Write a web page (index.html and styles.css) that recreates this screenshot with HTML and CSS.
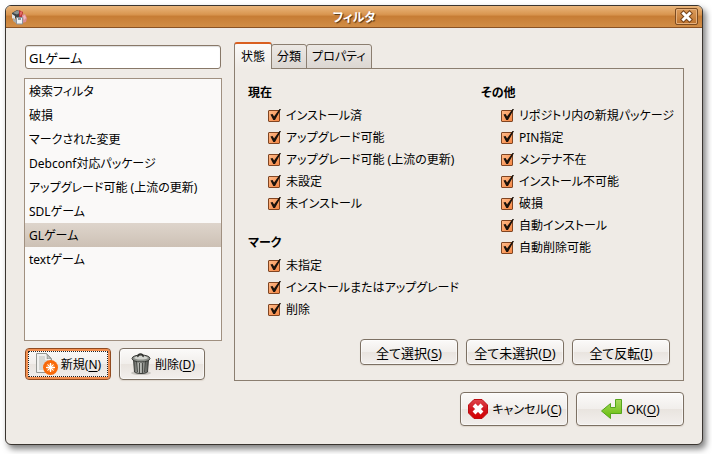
FILE: index.html
```
<!DOCTYPE html>
<html lang="ja">

<head>
  <meta charset="utf-8">
  <title>フィルタ</title>
  <link rel="stylesheet" href="styles.css">
</head>

<body>

  <form class="window">
    <header class="titlebar">
      <svg class="app-icon" width="16" height="16" viewBox="0 0 16 16">
        <path d="M1 4l5-3 5 2-1 5-4 2-5-3z" fill="#3f4446"/>
        <path d="M2 4l4-2.500 4 1.500-4 2.500z" fill="#8b9293"/>
        <path d="M1 5l3 2v5l-3-3z" fill="#e2e4e6"/>
        <path d="M8 1l4 2-1 5-3 1z" fill="#b92f33"/>
        <path d="M9 3l2-1v3l-2 2z" fill="#e06a66"/>
        <path d="M11 6l3-1 2 4-1 4-4 1z" fill="#d98d93"/>
        <path d="M12 7l2-1 1 3-2 2z" fill="#f0b9bd"/>
        <path d="M2 9l4 2v4l-4-3z" fill="#a9aaa9"/>
        <path d="M5.500 8.500h6v6.500h-6z" fill="#f0f3f6" stroke="#8b939b"/>
        <path d="M7 9h3v2H7z" fill="#8796a4"/>
      </svg>
      <h1 class="title">フィルタ</h1>
      <button class="close" type="button" aria-label="閉じる">
        <svg width="13" height="13" viewBox="0 0 13 13">
          <path d="M3.500 3.500l6 6M9.500 3.500l-6 6" stroke="#77451c" stroke-width="5" stroke-linecap="square"/>
          <path d="M3.500 3.500l6 6M9.500 3.500l-6 6" stroke="#fff" stroke-width="3" stroke-linecap="square"/>
        </svg>
      </button>
    </header>

    <main class="content">
      <section class="sidebar">
        <input class="name" type="text" value="GLゲーム" aria-label="フィルタ名">
        <ul class="filters">
          <li>検索フィルタ</li>
          <li>破損</li>
          <li>マークされた変更</li>
          <li>Debconf対応パッケージ</li>
          <li>アップグレード可能 (上流の更新)</li>
          <li>SDLゲーム</li>
          <li class="selected">GLゲーム</li>
          <li>textゲーム</li>
        </ul>
        <div class="sidebar-buttons">
          <button class="button focused" type="button">
            <svg width="24" height="24" viewBox="0 0 24 24">
              <defs>
                <radialGradient id="glow">
                  <stop offset="0" stop-color="#fff"/>
                  <stop offset=".4" stop-color="#ffc08a"/>
                  <stop offset="1" stop-color="#f8690a"/>
                </radialGradient>
              </defs>
              <path d="M1.500 1.500h10l5 5v14h-15z" fill="#f1f1ef" stroke="#969894"/>
              <path d="M11.500 1.500c1 2 1 3 .5 5 2-.5 3.500 0 4.500 1z" fill="#cfd0cd" stroke="#969894"/>
              <path d="M4 5h6M4 7h6M4 9h9M4 11h8M4 13h5M4 15h4M4 17h4" stroke="#bdbfba"/>
              <circle cx="15.500" cy="15.500" r="7.500" fill="#f8690a"/>
              <circle cx="15.500" cy="15.500" r="5" fill="url(#glow)"/>
              <path d="M15.500 11v9M11 15.500h9M12.500 12.500l6 6M18.500 12.500l-6 6" stroke="#fff"/>
            </svg>
            <span>新規(<u>N</u>)</span>
          </button>
          <button class="button" type="button">
            <svg width="24" height="24" viewBox="0 0 24 24">
              <defs>
                <linearGradient id="can">
                  <stop offset="0" stop-color="#555753"/>
                  <stop offset=".4" stop-color="#c5c7c2"/>
                  <stop offset="1" stop-color="#50524e"/>
                </linearGradient>
              </defs>
              <ellipse cx="12" cy="21" rx="10" ry="2" fill="#c7c4bf"/>
              <path d="M4.500 7l1 13c2 2 11 2 13 0l1-13z" fill="url(#can)" stroke="#3b3d3a"/>
              <path d="M7.500 10l1 10M10.500 11v10M13.500 11v10M16.500 10l-1 10" stroke="#4a4c48"/>
              <ellipse cx="12" cy="6.500" rx="9" ry="3.500" fill="#8d908b" stroke="#353733"/>
              <path d="M5 6c2-3 12-3 14 0-3 2-11 2-14 0z" fill="#d3d5d0"/>
              <path d="M9 5c-1-4 6-4 5 0" fill="none" stroke="#30322f" stroke-width="1.500"/>
            </svg>
            <span>削除(<u>D</u>)</span>
          </button>
        </div>
      </section>

      <section class="notebook">
        <div class="tabs" role="tablist">
          <button class="tab active" type="button" role="tab" aria-selected="true">状態</button>
          <button class="tab" type="button" role="tab">分類</button>
          <button class="tab" type="button" role="tab">プロパティ</button>
        </div>
        <div class="panel" role="tabpanel">
          <div class="groups">
            <div class="column">
              <fieldset>
                <legend>現在</legend>
                <label><input type="checkbox" checked>インストール済</label>
                <label><input type="checkbox" checked>アップグレード可能</label>
                <label><input type="checkbox" checked>アップグレード可能 (上流の更新)</label>
                <label><input type="checkbox" checked>未設定</label>
                <label><input type="checkbox" checked>未インストール</label>
              </fieldset>
              <fieldset>
                <legend>マーク</legend>
                <label><input type="checkbox" checked>未指定</label>
                <label><input type="checkbox" checked>インストールまたはアップグレード</label>
                <label><input type="checkbox" checked>削除</label>
              </fieldset>
            </div>
            <div class="column">
              <fieldset>
                <legend>その他</legend>
                <label><input type="checkbox" checked>リポジトリ内の新規パッケージ</label>
                <label><input type="checkbox" checked>PIN指定</label>
                <label><input type="checkbox" checked>メンテナ不在</label>
                <label><input type="checkbox" checked>インストール不可能</label>
                <label><input type="checkbox" checked>破損</label>
                <label><input type="checkbox" checked>自動インストール</label>
                <label><input type="checkbox" checked>自動削除可能</label>
              </fieldset>
            </div>
          </div>
          <div class="select-buttons">
            <button class="button" type="button"><span>全て選択(<u>S</u>)</span></button>
            <button class="button" type="button"><span>全て未選択(<u>D</u>)</span></button>
            <button class="button" type="button"><span>全て反転(<u>I</u>)</span></button>
          </div>
        </div>
      </section>
    </main>

    <footer class="actions">
      <button class="button" type="button">
        <svg width="24" height="24" viewBox="0 0 24 24">
          <defs>
            <linearGradient id="red" x2="0" y2="1">
              <stop offset="0" stop-color="#e0474d"/>
              <stop offset=".5" stop-color="#cf1720"/>
              <stop offset="1" stop-color="#d50000"/>
            </linearGradient>
          </defs>
          <path d="M8 2.500h8l5.500 5.500v8L16 21.500H8L2.500 16V8z" fill="url(#red)" stroke="#bd0d13"/>
          <path d="M8 8l8 8M16 8l-8 8" stroke="#fff" stroke-width="4"/>
        </svg>
        <span>キャンセル(<u>C</u>)</span>
      </button>
      <button class="button" type="submit">
        <svg width="24" height="24" viewBox="0 0 24 24">
          <defs>
            <linearGradient id="green" x2="0" y2="1">
              <stop offset="0" stop-color="#a7d95f"/>
              <stop offset="1" stop-color="#65bd08"/>
            </linearGradient>
          </defs>
          <path d="M15.500 2.500h6v14h-11v5L1.500 14l9-7.500v4h5z" fill="url(#green)" stroke="#55a51b"/>
        </svg>
        <span>OK(<u>O</u>)</span>
      </button>
    </footer>
  </form>

</body>

</html>
```
FILE: styles.css
```
* {
  box-sizing: border-box;
}

body {
  margin: 0;
  padding: 5px 9px 9px 5px;
  height: 100vh;
  background: #fff;
  color: #000;
  font: 13px/22px "Noto Sans", "Noto Sans CJK JP", sans-serif;
  font-feature-settings: "palt";
}

button,
input {
  font: inherit;
  font-feature-settings: inherit;
  color: inherit;
}

.window {
  display: flex;
  flex-direction: column;
  height: 100%;
  border: 1px solid #3a3530;
  border-radius: 6px;
  background: #efebe6;
  box-shadow: 3px 4px 6px rgba(0, 0, 0, 0.5);
}

.titlebar {
  display: flex;
  align-items: center;
  height: 22px;
  padding: 0 4px 0 5px;
  border-bottom: 1px solid #8a5224;
  border-radius: 5px 5px 0 0;
  background: linear-gradient(#eab67c, #d99650 40%, #c77d35 50%, #d18d46);
}

.app-icon {
  flex: none;
}

.title {
  flex: 1;
  margin: 0;
  padding: 2px 0 0 6px;
  color: #fff;
  font-size: 12px;
  line-height: 20px;
  text-align: center;
  text-shadow: 1px 1px 1px #513314;
}

.close {
  display: flex;
  align-items: center;
  justify-content: center;
  width: 23px;
  height: 17px;
  padding: 0;
  border: 1px solid #7b4c22;
  border-radius: 2px;
  background: linear-gradient(#dc9c5c, #bd732e);
  box-shadow: inset 0 0 0 1px #e6b17e;
}

.content {
  flex: 1;
  display: flex;
  gap: 12px;
  padding: 14px 18px 0;
}

.sidebar {
  flex: none;
  display: flex;
  flex-direction: column;
  width: 198px;
  padding: 3px 0 1px;
}

.name {
  height: 24px;
  margin: 0 1px;
  padding: 0 3px;
  border: 1px solid #887868;
  border-radius: 3px;
  background: #fff;
  box-shadow: inset 0 1px 1px #ddd;
}

.filters {
  flex: 1;
  margin: 9px 0 7px;
  padding: 0;
  border: 1px solid #a09080;
  background: #faf9f8;
  list-style: none;
  font-size: 12px;
}

.filters li {
  padding: 2px 0 0 4px;
  white-space: nowrap;
}

.filters .selected {
  background: linear-gradient(#ded5cc, #cdc1b5);
}

.sidebar-buttons {
  display: flex;
  gap: 8px;
  padding-left: 1px;
}

.button {
  display: flex;
  align-items: center;
  justify-content: center;
  gap: 2px;
  height: 32px;
  padding: 0;
  border: 1px solid #7c7063;
  border-radius: 4px;
  background: linear-gradient(#fbfaf9, #f1eeeb 50%, #e9e4df 51%, #f2efed);
  box-shadow: inset 0 0 0 1px #fff8, 0 1px 1px #ddd6ce;
  font-size: 12px;
  white-space: nowrap;
}

.button span {
  padding-top: 2px;
}

.button u {
  text-underline-offset: 2px;
}

.sidebar-buttons .button {
  width: 86px;
}

.button.focused {
  border-color: #914b20;
  box-shadow: inset 0 0 0 2px #f28f50;
  outline: 1px dotted #222;
  outline-offset: -4px;
}

.notebook {
  flex: 1;
  display: flex;
  flex-direction: column;
  min-width: 0;
}

.tabs {
  display: flex;
  align-items: flex-end;
  margin-bottom: -1px;
}

.tab {
  height: 25px;
  margin-left: -1px;
  padding: 0 5px;
  border: 1px solid #8b7e70;
  border-radius: 3px 3px 0 0;
  background: linear-gradient(#ece8e4, #dcd7d2);
  font-size: 12px;
}

/* covers the top border of the panel */
.tab.active {
  position: relative;
  height: 27px;
  margin-left: 0;
  padding: 0 6px;
  border-top: 2px solid #d95f20;
  border-bottom: 0;
  background: linear-gradient(#fbfaf9, #efebe6);
}

.panel {
  flex: 1;
  display: flex;
  flex-direction: column;
  justify-content: space-between;
  padding: 12px 0 15px 13px;
  border: 1px solid #8b7e70;
}

.groups {
  display: flex;
}

.column {
  display: flex;
  flex-direction: column;
  gap: 16px;
  width: 233px;
}

.column:last-child {
  width: auto;
}

fieldset {
  margin: 0;
  padding: 0;
  border: 0;
}

legend {
  padding: 0;
  font-size: 12px;
  line-height: 24px;
  font-weight: bold;
}

label {
  display: flex;
  align-items: center;
  gap: 6px;
  padding-left: 20px;
  font-size: 12px;
  white-space: nowrap;
}

input[type="checkbox"] {
  appearance: none;
  flex: none;
  width: 12px;
  height: 12px;
  margin: 0;
  border: 1px solid #804522;
  border-radius: 1px;
  background: linear-gradient(135deg, #ffb987, #f58744);
}

/* the tick sticks out over the top right corner of the box */
input[type="checkbox"]:checked::before {
  content: "";
  display: block;
  width: 12px;
  height: 11px;
  margin-top: -2px;
  background: #1b120b;
  clip-path: polygon(12% 50%, 30% 45%, 42% 68%, 88% 0, 100% 0, 50% 100%, 36% 100%);
}

.select-buttons {
  display: flex;
  justify-content: flex-end;
  gap: 8px;
  padding-right: 13px;
}

.select-buttons .button {
  width: 98px;
  height: 26px;
  font-size: 13px;
}

.actions {
  display: flex;
  justify-content: flex-end;
  gap: 8px;
  padding: 11px 18px 18px;
}

.actions .button {
  width: 108px;
  height: 34px;
}
```
